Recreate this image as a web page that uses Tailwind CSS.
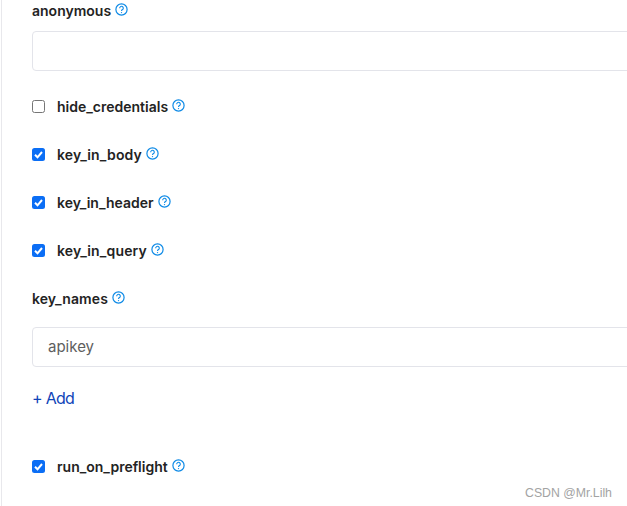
<!DOCTYPE html>
<html>
<head>
<script src="https://cdn.jsdelivr.net/npm/@tailwindcss/browser@4"></script>
</head>
<body class="bg-white m-0">
<div class="relative h-[506px] w-[627px] overflow-hidden font-['Inter',sans-serif]">
  <div class="h-[506px] ml-[1px] border-l border-[#e8e8ec] pl-[30px] w-[800px] text-[#232323]">
    <div class="flex items-center h-[20px] text-[14px] font-semibold">anonymous
      <svg class="ml-[4px] -mt-[1px]" width="13" height="13" viewBox="0 0 13 13" fill="none"><circle cx="6.5" cy="6.5" r="5.6" stroke="#0d8ae6" stroke-width="1.2"/><path d="M4.7 5.2a1.8 1.8 0 1 1 2.8 1.4c-.7.4-1 .7-1 1.3" stroke="#0d8ae6" stroke-width="1.1"/><circle cx="6.5" cy="9.6" r=".7" fill="#0d8ae6"/></svg>
    </div>
    <div class="mt-[11px] h-[40px] border border-[#e3e4ea] rounded-[4px] bg-white"></div>
    <div class="mt-[25px] flex items-center h-[20px] text-[14px] font-semibold">
      <span class="w-[13px] h-[13px] border border-[#767676] rounded-[2.5px] bg-white"></span>
      <span class="ml-[12px]">hide_credentials</span>
      <svg class="ml-[4px] -mt-[1px]" width="13" height="13" viewBox="0 0 13 13" fill="none"><circle cx="6.5" cy="6.5" r="5.6" stroke="#0d8ae6" stroke-width="1.2"/><path d="M4.7 5.2a1.8 1.8 0 1 1 2.8 1.4c-.7.4-1 .7-1 1.3" stroke="#0d8ae6" stroke-width="1.1"/><circle cx="6.5" cy="9.6" r=".7" fill="#0d8ae6"/></svg>
    </div>
    <div class="mt-[28px] flex items-center h-[20px] text-[14px] font-semibold">
      <svg width="13" height="13" viewBox="0 0 13 13"><rect width="13" height="13" rx="2.5" fill="#0b6ef5"/><path d="M3 6.8l2.5 2.5L10 4" stroke="#fff" stroke-width="2" fill="none"/></svg>
      <span class="ml-[12px] tracking-[0.15px]">key_in_body</span>
      <svg class="ml-[4px] -mt-[1px]" width="13" height="13" viewBox="0 0 13 13" fill="none"><circle cx="6.5" cy="6.5" r="5.6" stroke="#0d8ae6" stroke-width="1.2"/><path d="M4.7 5.2a1.8 1.8 0 1 1 2.8 1.4c-.7.4-1 .7-1 1.3" stroke="#0d8ae6" stroke-width="1.1"/><circle cx="6.5" cy="9.6" r=".7" fill="#0d8ae6"/></svg>
    </div>
    <div class="mt-[28px] flex items-center h-[20px] text-[14px] font-semibold">
      <svg width="13" height="13" viewBox="0 0 13 13"><rect width="13" height="13" rx="2.5" fill="#0b6ef5"/><path d="M3 6.8l2.5 2.5L10 4" stroke="#fff" stroke-width="2" fill="none"/></svg>
      <span class="ml-[12px]">key_in_header</span>
      <svg class="ml-[4px] -mt-[1px]" width="13" height="13" viewBox="0 0 13 13" fill="none"><circle cx="6.5" cy="6.5" r="5.6" stroke="#0d8ae6" stroke-width="1.2"/><path d="M4.7 5.2a1.8 1.8 0 1 1 2.8 1.4c-.7.4-1 .7-1 1.3" stroke="#0d8ae6" stroke-width="1.1"/><circle cx="6.5" cy="9.6" r=".7" fill="#0d8ae6"/></svg>
    </div>
    <div class="mt-[28px] flex items-center h-[20px] text-[14px] font-semibold">
      <svg width="13" height="13" viewBox="0 0 13 13"><rect width="13" height="13" rx="2.5" fill="#0b6ef5"/><path d="M3 6.8l2.5 2.5L10 4" stroke="#fff" stroke-width="2" fill="none"/></svg>
      <span class="ml-[12px] tracking-[0.15px]">key_in_query</span>
      <svg class="ml-[4px] -mt-[1px]" width="13" height="13" viewBox="0 0 13 13" fill="none"><circle cx="6.5" cy="6.5" r="5.6" stroke="#0d8ae6" stroke-width="1.2"/><path d="M4.7 5.2a1.8 1.8 0 1 1 2.8 1.4c-.7.4-1 .7-1 1.3" stroke="#0d8ae6" stroke-width="1.1"/><circle cx="6.5" cy="9.6" r=".7" fill="#0d8ae6"/></svg>
    </div>
    <div class="mt-[28px] flex items-center h-[20px] text-[14px] font-semibold tracking-[0.1px]">key_names
      <svg class="ml-[4px] -mt-[1px]" width="13" height="13" viewBox="0 0 13 13" fill="none"><circle cx="6.5" cy="6.5" r="5.6" stroke="#0d8ae6" stroke-width="1.2"/><path d="M4.7 5.2a1.8 1.8 0 1 1 2.8 1.4c-.7.4-1 .7-1 1.3" stroke="#0d8ae6" stroke-width="1.1"/><circle cx="6.5" cy="9.6" r=".7" fill="#0d8ae6"/></svg>
    </div>
    <div class="mt-[19px] h-[40px] border border-[#e3e4ea] rounded-[4px] bg-white flex items-center pl-[15px] text-[15px] text-[#5e5e5e]">apikey</div>
    <div class="mt-[20px] h-[22px] flex items-center text-[16px] tracking-[-0.7px] text-[#0f44b8]">+ Add</div>
    <div class="mt-[47px] flex items-center h-[20px] text-[14px] font-semibold">
      <svg width="13" height="13" viewBox="0 0 13 13"><rect width="13" height="13" rx="2.5" fill="#0b6ef5"/><path d="M3 6.8l2.5 2.5L10 4" stroke="#fff" stroke-width="2" fill="none"/></svg>
      <span class="ml-[12px]">run_on_preflight</span>
      <svg class="ml-[4px] -mt-[1px]" width="13" height="13" viewBox="0 0 13 13" fill="none"><circle cx="6.5" cy="6.5" r="5.6" stroke="#0d8ae6" stroke-width="1.2"/><path d="M4.7 5.2a1.8 1.8 0 1 1 2.8 1.4c-.7.4-1 .7-1 1.3" stroke="#0d8ae6" stroke-width="1.1"/><circle cx="6.5" cy="9.6" r=".7" fill="#0d8ae6"/></svg>
    </div>
  </div>
  <div class="absolute left-[525px] top-[484px] text-[12.3px] text-[#a3a3a3] font-['Liberation_Sans',sans-serif]">CSDN @Mr.Lilh</div>
</div>
</body>
</html>
